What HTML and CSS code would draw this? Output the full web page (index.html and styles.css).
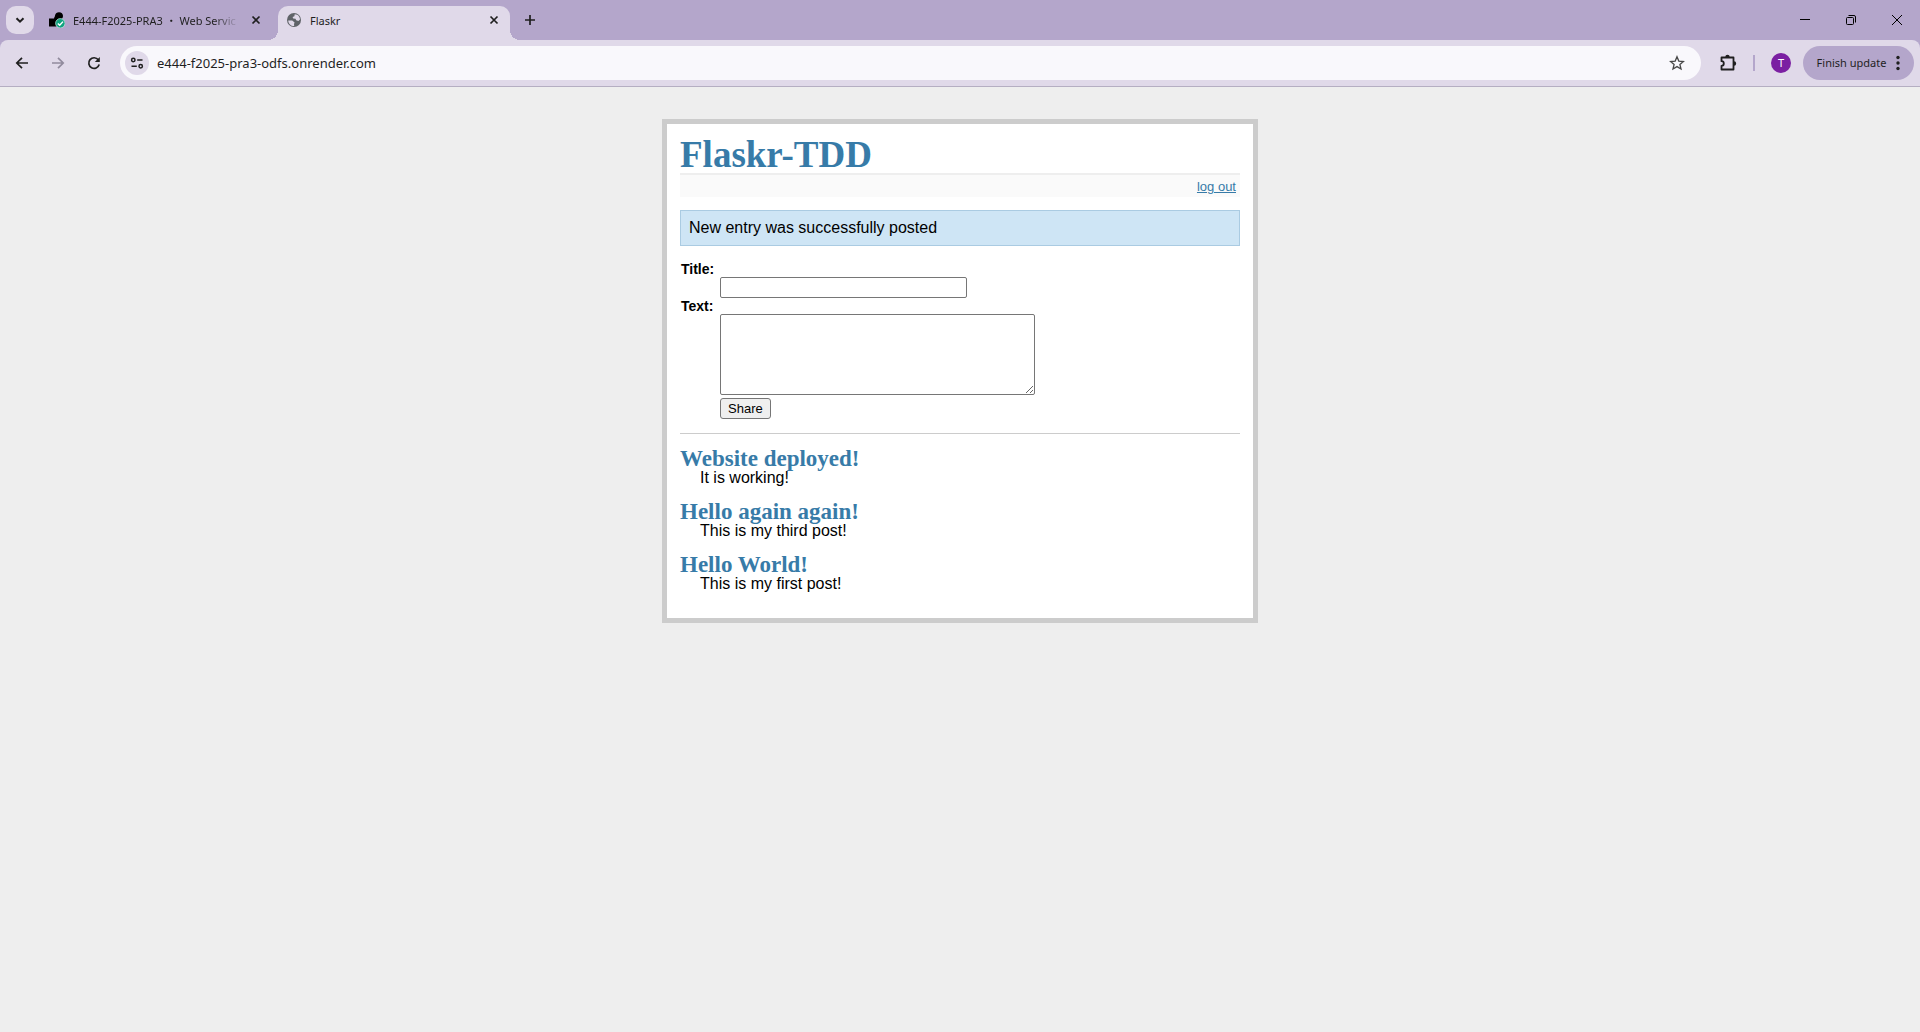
FILE: index.html
```html
<!DOCTYPE html>
<html lang="en">
<head>
<meta charset="utf-8">
<title>Flaskr</title>
<link rel="stylesheet" href="styles.css">
</head>
<body>
<header class="browser">
  <div class="tabstrip">
    <button class="tab-search" aria-label="Search tabs"><svg width="28" height="28" viewBox="0 0 28 28"><path d="M10.5 12.2l3.5 3.5 3.5-3.5" fill="none" stroke="#1f1f1f" stroke-width="2"/></svg></button>
    <div class="tab">
      <svg class="favicon" width="16" height="16" viewBox="0 0 16 16"><path d="M0 6.500h5C5.500 4.500 6 4.800 6 3.500 6.500 1.200 8 .2 10 .2c2.500 0 4 1.700 4 3.900C14 6.400 12.500 8 10 8.200L7.500 10v4.500H0z" fill="#000"/><circle cx="11.300" cy="11.300" r="4.700" fill="#10a37f" stroke="#c9e8df" stroke-width=".7"/><path d="M8.800 11.400l1.900 1.900 3.300-3.700" fill="none" stroke="#fff" stroke-width="1.400"/></svg>
      <span class="tab-title faded">E444-F2025-PRA3 ・ Web Servic</span>
      <button class="tab-close" aria-label="Close tab"><svg width="16" height="16" viewBox="0 0 16 16"><path d="M4.500 4.500l7 7M11.500 4.500l-7 7" stroke="#1f1f1f" stroke-width="1.700"/></svg></button>
    </div>
    <div class="tab active">
      <svg class="favicon" width="16" height="16" viewBox="0 0 16 16"><circle cx="8" cy="8" r="7" fill="#5f6368"/><path d="M2.200 8.400l4 .2 2.400 2-.6 1.500.2 1.900C5 14.100 2.400 11.600 2.200 8.400z" fill="#e0d9e9"/><path d="M8.700 2.200l2.500.6c1.700.9 2.700 2.600 2.800 4.700L12.400 9l-2.200-.7-.7-1.500-2.300-.3-.6-1.400 1.800-.8z" fill="#e0d9e9"/></svg>
      <span class="tab-title">Flaskr</span>
      <button class="tab-close" aria-label="Close tab"><svg width="16" height="16" viewBox="0 0 16 16"><path d="M4.500 4.500l7 7M11.500 4.500l-7 7" stroke="#1f1f1f" stroke-width="1.700"/></svg></button>
    </div>
    <button class="new-tab" aria-label="New tab"><svg width="16" height="16" viewBox="0 0 16 16"><path d="M8 3v10M3 8h10" stroke="#1f1f1f" stroke-width="1.700"/></svg></button>
    <div class="window-controls">
      <button aria-label="Minimize"><svg width="12" height="12" viewBox="0 0 12 12"><path d="M1 5.500h10" stroke="#000"/></svg></button>
      <button aria-label="Restore"><svg width="12" height="12" viewBox="0 0 12 12" fill="none" stroke="#000"><rect x="1.500" y="3.500" width="7" height="7" rx="1"/><path d="M3.500 1.500H9a1.500 1.500 0 0 1 1.500 1.500v5.500"/></svg></button>
      <button aria-label="Close"><svg width="12" height="12" viewBox="0 0 12 12"><path d="M1 1l10 10M11 1L1 11" stroke="#000"/></svg></button>
    </div>
  </div>
  <div class="toolbar">
    <div class="nav-buttons">
      <button aria-label="Back"><svg width="16" height="16" viewBox="0 0 16 16" fill="none" stroke="#1f1f1f" stroke-width="1.700"><path d="M14 8H3M8 2.800L2.800 8 8 13.200"/></svg></button>
      <button aria-label="Forward"><svg width="16" height="16" viewBox="0 0 16 16" fill="none" stroke="#918b9d" stroke-width="1.700"><path d="M2 8h11M8 2.800L13.200 8 8 13.200"/></svg></button>
      <button aria-label="Reload"><svg width="16" height="16" viewBox="0 0 16 16"><path d="M13.200 9.500A5.300 5.300 0 1 1 12.300 4.800" fill="none" stroke="#1f1f1f" stroke-width="1.700"/><path d="M13.800 2v5H8.800z" fill="#1f1f1f"/></svg></button>
    </div>
    <div class="omnibox">
      <button class="site-info" aria-label="Site information"><svg width="14" height="14" viewBox="0 0 14 14" fill="none" stroke="#1f1f1f" stroke-width="1.500"><circle cx="3.300" cy="4" r="1.700"/><path d="M7.200 4h5.300M1.500 10.200h5.300"/><circle cx="10.700" cy="10.200" r="1.700"/></svg></button>
      <input class="address" type="text" aria-label="Address" value="e444-f2025-pra3-odfs.onrender.com">
      <button class="star" aria-label="Bookmark"><svg width="16" height="16" viewBox="0 0 16 16"><path d="M8 1.800l1.800 4.300 4.600.4-3.500 3 1.100 4.500L8 11.600 4 14l1.100-4.500-3.500-3 4.600-.4z" fill="none" stroke="#474747" stroke-width="1.300"/></svg></button>
    </div>
    <button class="extensions" aria-label="Extensions"><svg width="18" height="18" viewBox="0 0 18 18"><path d="M2.500 3.500h12v12h-12v-3.700a2.300 2.300 0 0 0 0-4.600z" fill="none" stroke="#1f1f1f" stroke-width="1.800" stroke-linejoin="round"/><path d="M6.300 3a2.200 2.200 0 0 1 4.400 0zM15 7.300a2.200 2.200 0 0 1 0 4.400z" fill="#1f1f1f"/></svg></button>
    <span class="divider"></span>
    <button class="avatar" aria-label="Profile">T</button>
    <button class="update">Finish update<svg width="4" height="16" viewBox="0 0 4 16" fill="#1f1f1f"><circle cx="2" cy="2.500" r="1.700"/><circle cx="2" cy="8" r="1.700"/><circle cx="2" cy="13.500" r="1.700"/></svg></button>
  </div>
</header>
<main class="page">
  <h1>Flaskr-TDD</h1>
  <div class="metanav"><a href="#logout">log out</a></div>
  <div class="flash">New entry was successfully posted</div>
  <form class="add-entry">
    <label for="title">Title:</label>
    <input id="title" type="text" name="title">
    <label for="text">Text:</label>
    <textarea id="text" name="text"></textarea>
    <button type="button">Share</button>
  </form>
  <ul class="entries">
    <li><h2>Website deployed!</h2><p>It is working!</p></li>
    <li><h2>Hello again again!</h2><p>This is my third post!</p></li>
    <li><h2>Hello World!</h2><p>This is my first post!</p></li>
  </ul>
</main>
</body>
</html>
```
FILE: styles.css
```css
* { box-sizing: border-box; }
body {
  margin: 0;
  background: #eee;
  color: #000;
  font: 16px/18px "Liberation Sans", Arial, sans-serif;
}

/* Browser frame */
.browser {
  background: #b4a6cb;
  font: 11px/16px "Noto Sans", "Noto Sans CJK JP", sans-serif;
  color: #1f1f1f;
}
.browser button {
  display: flex;
  align-items: center;
  justify-content: center;
  padding: 0;
  border: 0;
  background: none;
  color: inherit;
  font: inherit;
}
.browser svg { flex: none; }
.tabstrip {
  display: flex;
  align-items: flex-end;
  height: 40px;
  padding-left: 6px;
}
.browser .tab-search {
  width: 28px;
  height: 28px;
  margin-bottom: 6px;
  border-radius: 10px;
  background: #e0d9e9;
}
.tab {
  position: relative;
  display: flex;
  align-items: center;
  width: 232px;
  height: 34px;
  padding: 0 8px 6px 9px;
}
.tab:not(.active) { margin-left: 6px; }
.tab-title {
  flex: 1;
  min-width: 0;
  margin: 0 9px 0 8px;
  padding-top: 1px;
  overflow: hidden;
  white-space: nowrap;
}
.faded {
  -webkit-mask-image: linear-gradient(to right, #000 85%, transparent);
  mask-image: linear-gradient(to right, #000 85%, transparent);
}
.active {
  margin-left: 6px;
  padding-left: 8px;
  border-radius: 10px 10px 0 0;
  background: #e0d9e9;
}
.active::before,
.active::after {
  content: "";
  position: absolute;
  bottom: 0;
  width: 10px;
  height: 10px;
}
.active::before {
  right: 100%;
  background: radial-gradient(circle at 0 0, transparent 10px, #e0d9e9 10px);
}
.active::after {
  left: 100%;
  background: radial-gradient(circle at 100% 0, transparent 10px, #e0d9e9 10px);
}
.browser .new-tab {
  width: 28px;
  height: 28px;
  margin: 0 0 6px 6px;
}
.window-controls {
  display: flex;
  align-self: flex-start;
  margin-left: auto;
}
.window-controls button { width: 46px; height: 40px; }
.toolbar {
  display: flex;
  align-items: center;
  height: 47px;
  padding: 0 6px 1px 4px;
  border-bottom: 1px solid #b5aec2;
  border-radius: 8px 8px 0 0;
  background: #e0d9e9;
}
.nav-buttons { display: flex; }
.nav-buttons button { width: 36px; height: 34px; }
.omnibox {
  display: flex;
  align-items: center;
  flex: 1;
  height: 34px;
  margin-left: 8px;
  padding: 0 16px 0 5px;
  border-radius: 17px;
  background: #f9f8fc;
}
.browser .site-info {
  width: 24px;
  height: 24px;
  border-radius: 50%;
  background: #e0d9e9;
}
.address {
  flex: 1;
  padding: 0 8px;
  border: 0;
  background: none;
  color: #1f1f1f;
  font: 13px/20px "Noto Sans", sans-serif;
}
.browser .extensions { margin-left: 18px; }
.divider {
  width: 2px;
  height: 16px;
  margin: 0 16px;
  background: #b4a6cb;
}
.browser .avatar {
  width: 20px;
  height: 20px;
  border-radius: 50%;
  background: #7b1fa2;
  color: #fff;
}
.browser .update {
  gap: 10px;
  width: 111px;
  height: 34px;
  margin-left: 12px;
  border-radius: 17px;
  background: #b4a6cb;
}

/* Flaskr page */
.page {
  max-width: 596px;
  margin: 32px auto;
  padding: 13px 13px 12px;
  border: 5px solid #ccc;
  background: #fff;
}
h1, h2, p, ul { margin: 0; }
h1, h2, a { color: #377ba8; }
h1, h2 { font-family: Georgia, "Liberation Serif", serif; }
h1 {
  border-bottom: 2px solid #eee;
  font-size: 37px;
  line-height: 36px;
}
.metanav {
  margin-bottom: 13px;
  padding: 5px 4px 3px;
  background: #fafafa;
  font-size: 13px;
  line-height: 14px;
  text-align: right;
}
.flash {
  padding: 8px;
  border: 1px solid #aacbe2;
  background: #cee5f5;
}
.add-entry {
  display: flex;
  flex-direction: column;
  align-items: flex-start;
  padding: 15px 0 14px;
  border-bottom: 1px solid #ccc;
}
.add-entry label {
  padding-left: 1px;
  font-size: 14px;
  font-weight: bold;
  line-height: 16px;
}
.add-entry input,
.add-entry textarea,
.add-entry button {
  margin: 0 0 0 40px;
  font: 13px/15px "Liberation Sans", Arial, sans-serif;
}
.add-entry input,
.add-entry textarea {
  max-width: calc(100% - 40px);
  border: 1px solid #767676;
  border-radius: 2px;
  background: #fff;
}
.add-entry input { width: 247px; height: 21px; }
.add-entry textarea { width: 315px; height: 81px; margin-bottom: 3px; }
.add-entry button {
  padding: 2px 7px;
  border: 1px solid #767676;
  border-radius: 3px;
  background: #efefef;
  color: #000;
}
.entries { padding: 0; list-style: none; }
.entries li { margin: 13px 0; }
.entries h2 { padding-top: 2px; font-size: 23px; line-height: 20px; }
.entries p { margin-left: 20px; }
```
